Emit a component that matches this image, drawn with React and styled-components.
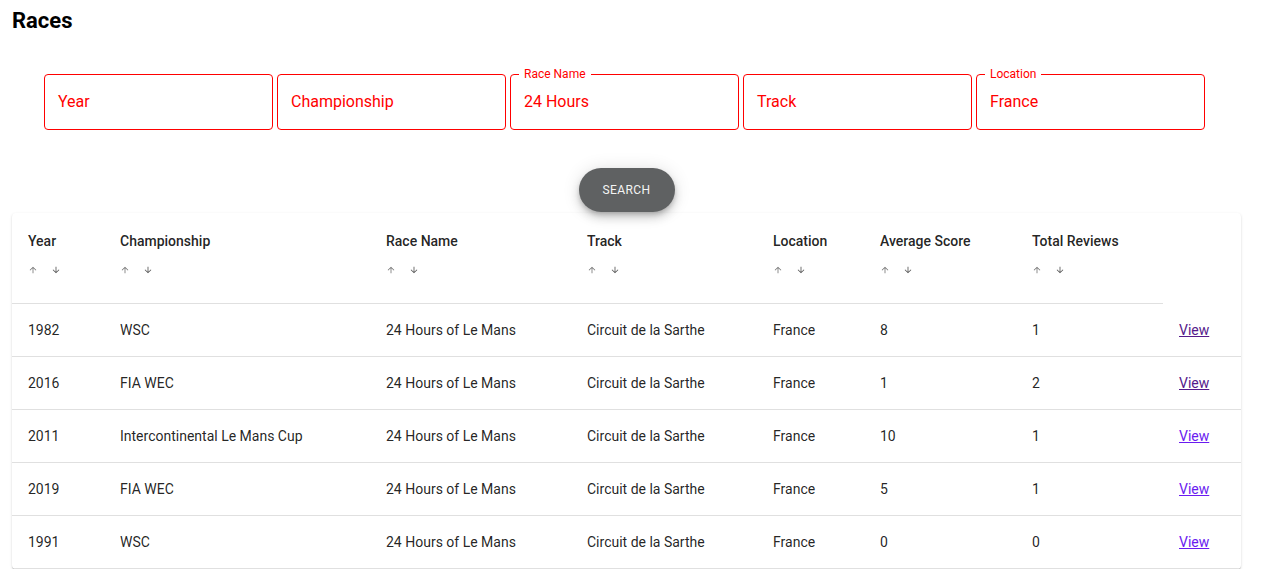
import React from 'react'
import styled, { createGlobalStyle } from 'styled-components'

const GlobalStyle = createGlobalStyle`
  body {
    margin: 0;
    background: #ffffff;
    font-family: Roboto, "Liberation Sans", sans-serif;
    color: rgba(0, 0, 0, 0.87);
  }
`

const filters = [
  { label: 'Year', value: '' },
  { label: 'Championship', value: '' },
  { label: 'Race Name', value: '24 Hours' },
  { label: 'Track', value: '' },
  { label: 'Location', value: 'France' },
]

const columns = ['Year', 'Championship', 'Race Name', 'Track', 'Location', 'Average Score', 'Total Reviews']
const widths = [92, 266, 201, 186, 107, 152, 147, 78]

const races = [
  { year: 1982, champ: 'WSC', score: 8, reviews: 1, visited: true },
  { year: 2016, champ: 'FIA WEC', score: 1, reviews: 2, visited: true },
  { year: 2011, champ: 'Intercontinental Le Mans Cup', score: 10, reviews: 1 },
  { year: 2019, champ: 'FIA WEC', score: 5, reviews: 1 },
  { year: 1991, champ: 'WSC', score: 0, reviews: 0 },
]

const Arrow = ({ down }) => (
  <svg width="10" height="10" viewBox="0 0 24 24" style={down ? { transform: 'rotate(180deg)' } : undefined}>
    <path fill="currentColor" d="M4 12l1.41 1.41L11 7.83V20h2V7.83l5.58 5.59L20 12l-8-8-8 8z" />
  </svg>
)

export default function App() {
  return (
    <Page>
      <GlobalStyle />
      <Title>Races</Title>

      <FilterRow>
        {filters.map(f => (
          <Field key={f.label}>
            {f.value && <FloatLabel>{f.label}</FloatLabel>}
            <Input>{f.value || f.label}</Input>
          </Field>
        ))}
      </FilterRow>

      <ButtonRow>
        <SearchButton>Search</SearchButton>
      </ButtonRow>

      <Card>
        <Table>
          <colgroup>
            {widths.map((w, i) => <col key={i} style={{ width: w }} />)}
          </colgroup>
          <thead>
            <tr>
              {columns.map(c => (
                <HeadCell key={c}>
                  <HeadTitle>{c}</HeadTitle>
                  <Sorters>
                    <SortButton $light><Arrow /></SortButton>
                    <SortButton><Arrow down /></SortButton>
                  </Sorters>
                </HeadCell>
              ))}
            </tr>
          </thead>
          <tbody>
            {races.map(r => (
              <tr key={r.year + r.champ}>
                <Cell>{r.year}</Cell>
                <Cell>{r.champ}</Cell>
                <Cell>24 Hours of Le Mans</Cell>
                <Cell>Circuit de la Sarthe</Cell>
                <Cell>France</Cell>
                <Cell>{r.score}</Cell>
                <Cell>{r.reviews}</Cell>
                <Cell><ViewLink href="#" $visited={r.visited}>View</ViewLink></Cell>
              </tr>
            ))}
          </tbody>
        </Table>
      </Card>
    </Page>
  )
}

const Page = styled.div`
  padding: 0 35px 0 12px;
`

const Title = styled.h1`
  margin: 5px 0 0;
  font-size: 22px;
  line-height: 32px;
  font-weight: 700;
  color: #000;
`

const FilterRow = styled.div`
  display: flex;
  justify-content: center;
  gap: 4px;
  margin-top: 37px;
  padding-right: 4px;
`

const Field = styled.div`
  position: relative;
  width: 229px;
  height: 56px;
  box-sizing: border-box;
  border: 1px solid #ff0000;
  border-radius: 4px;
`

const FloatLabel = styled.span`
  position: absolute;
  top: -8px;
  left: 8px;
  padding: 0 5px;
  background: #fff;
  font-size: 12px;
  line-height: 14px;
  color: #ff0000;
`

const Input = styled.div`
  padding: 15px 13px 17px;
  font-size: 16px;
  line-height: 23px;
  color: #ff0000;
`

const ButtonRow = styled.div`
  display: flex;
  justify-content: center;
  margin-top: 38px;
`

const SearchButton = styled.button`
  width: 96px;
  height: 44px;
  border: none;
  border-radius: 22px;
  background: #5f6162;
  color: #f4f4f4;
  font-family: Roboto, "Liberation Sans", sans-serif;
  font-size: 12px;
  font-weight: 400;
  letter-spacing: 0.4px;
  text-transform: uppercase;
  box-shadow: 0px 3px 5px -1px rgba(0,0,0,0.2), 0px 6px 10px 0px rgba(0,0,0,0.14), 0px 1px 18px 0px rgba(0,0,0,0.12);
`

const Card = styled.div`
  margin-top: 1px;
  background: #fff;
  border-radius: 4px;
  overflow: hidden;
  box-shadow: 0px 2px 1px -1px rgba(0,0,0,0.2), 0px 1px 1px 0px rgba(0,0,0,0.14), 0px 1px 3px 0px rgba(0,0,0,0.12);
`

const Table = styled.table`
  width: 100%;
  table-layout: fixed;
  border-collapse: collapse;
`

const HeadCell = styled.th`
  padding: 16px;
  text-align: left;
  vertical-align: top;
  border-bottom: 1px solid rgb(224, 224, 224);
  font-size: 14px;
  font-weight: 500;
`

const HeadTitle = styled.div`
  line-height: 24px;
`

const Sorters = styled.div`
  display: flex;
  align-items: center;
  gap: 13px;
  height: 34px;
`

const SortButton = styled.span`
  display: flex;
  color: ${p => (p.$light ? '#777' : '#555')};
`

const Cell = styled.td`
  padding: 16px;
  font-size: 14px;
  line-height: 20px;
  border-bottom: 1px solid rgb(224, 224, 224);
  color: rgba(0, 0, 0, 0.87);
  white-space: nowrap;
`

const ViewLink = styled.a`
  color: ${p => (p.$visited ? '#551a8b' : '#6a1bf0')};
  text-decoration: underline;
`
